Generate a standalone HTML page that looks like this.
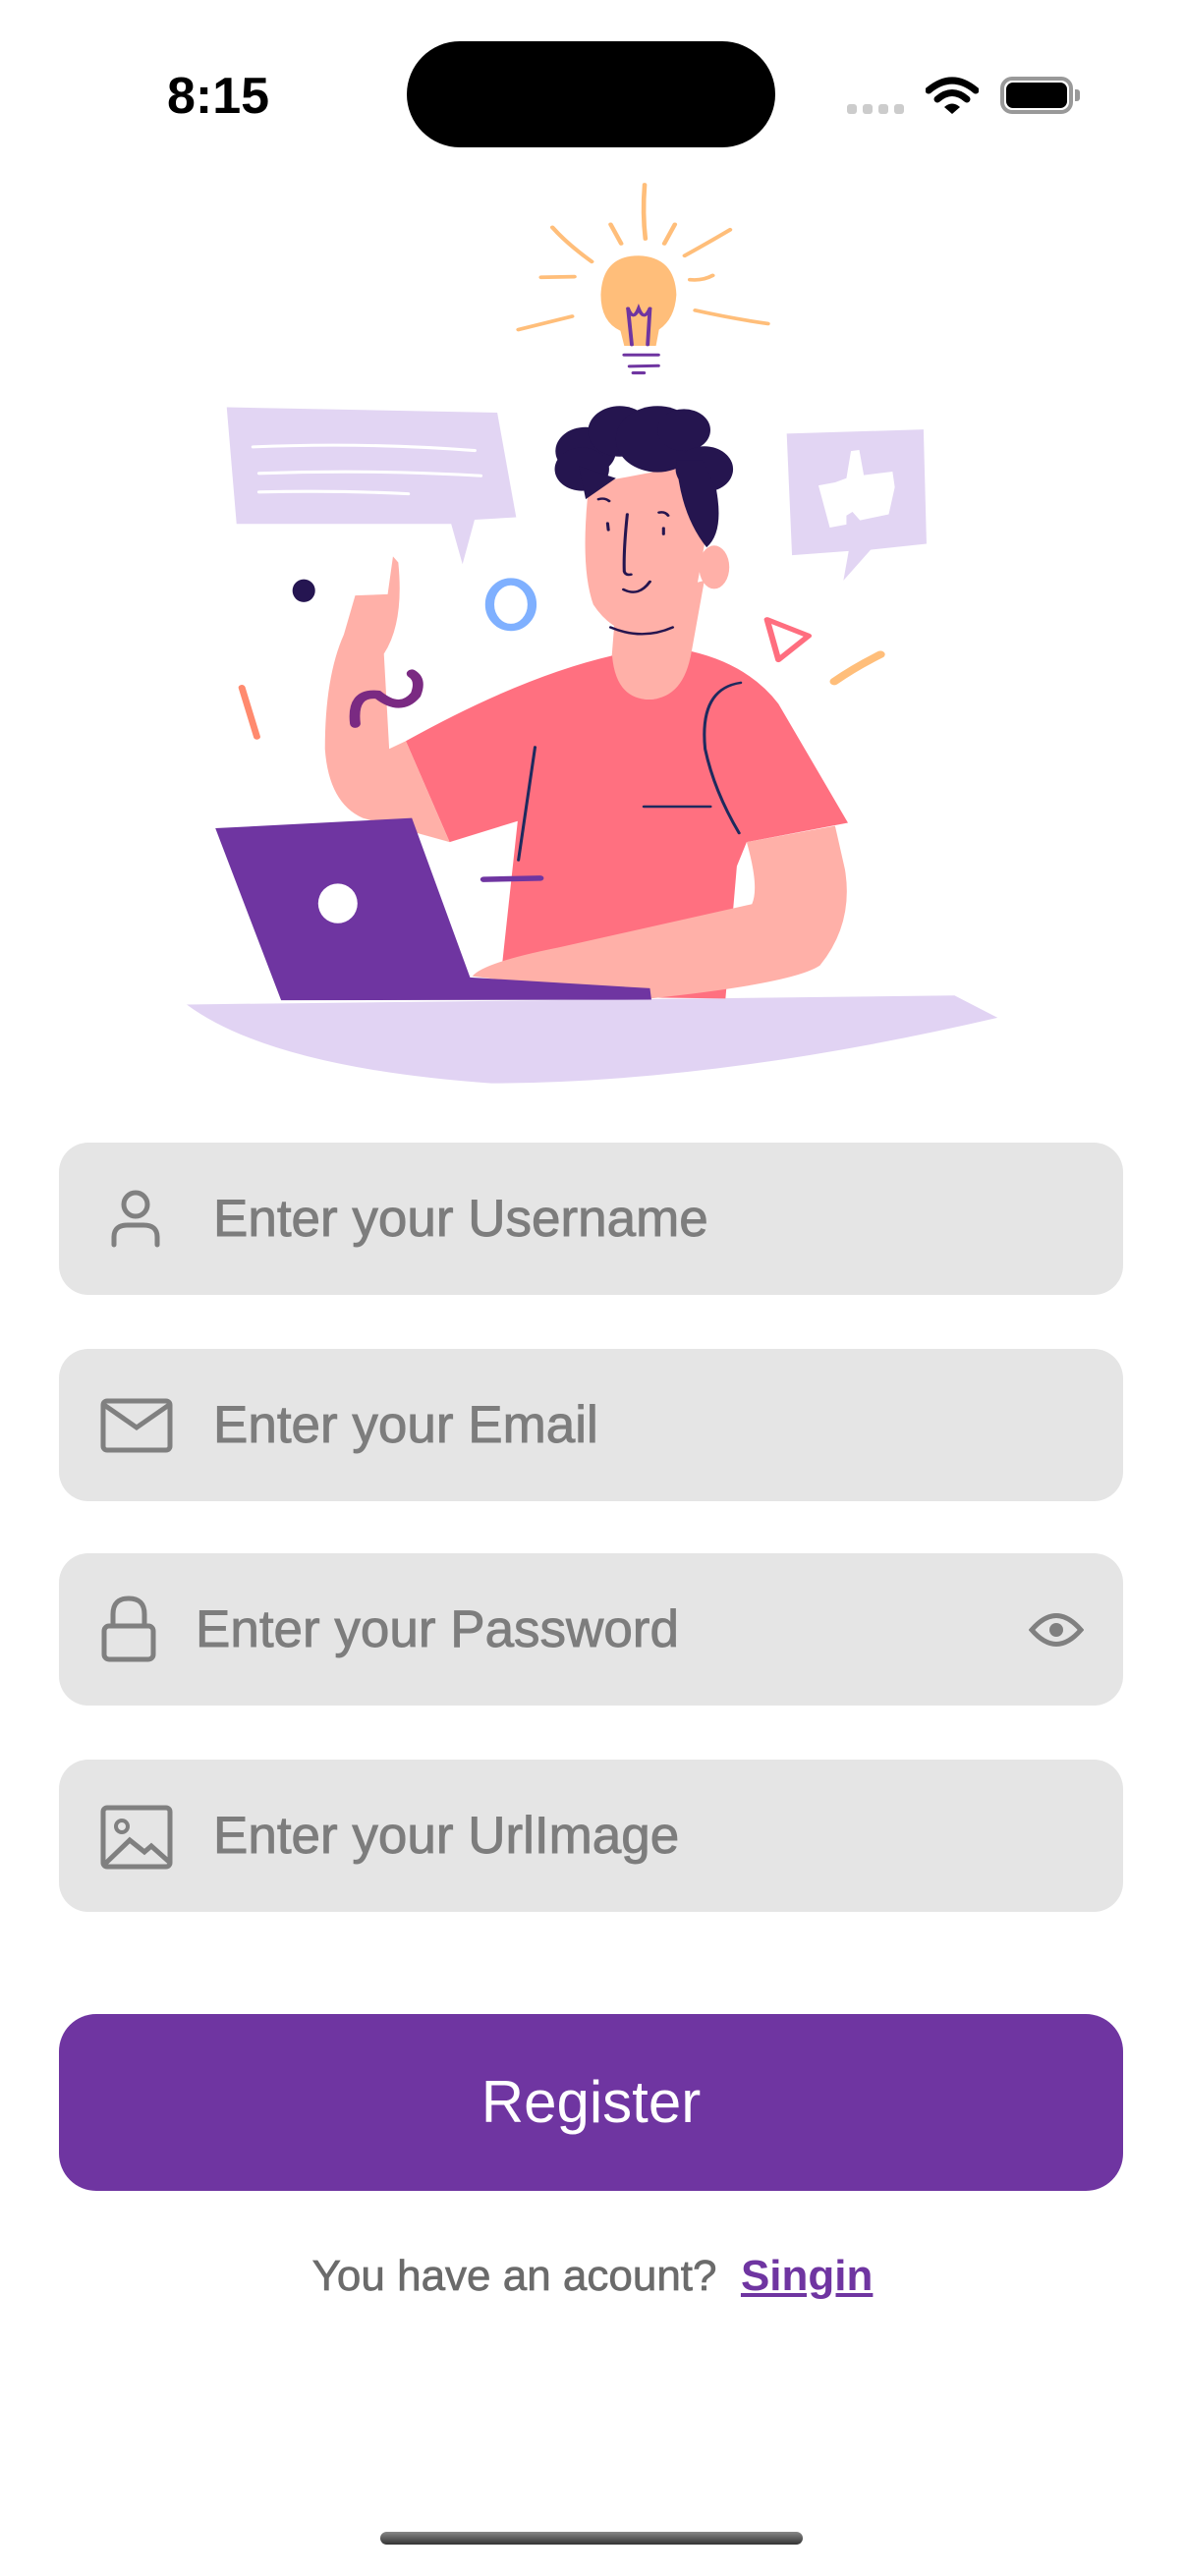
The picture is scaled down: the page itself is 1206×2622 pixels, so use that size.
<!DOCTYPE html>
<html><head><meta charset="utf-8">
<style>
*{margin:0;padding:0;box-sizing:border-box}
html,body{width:1206px;height:2622px;background:#fff;overflow:hidden;font-family:"Liberation Sans",sans-serif;position:relative}
.abs{position:absolute}
.field{position:absolute;left:60px;width:1083px;height:155px;background:#e5e5e5;border-radius:30px}
.ph{position:absolute;left:157px;top:0;line-height:155px;font-size:53px;color:#7d7d7d;-webkit-text-stroke:0.9px #7d7d7d}
.ic{position:absolute}
</style></head><body>

<div class="abs" style="left:170px;top:68px;font-size:52px;font-weight:bold;color:#000">8:15</div>
<div class="abs" style="left:414px;top:42px;width:375px;height:108px;background:#000;border-radius:54px"></div>
<div class="abs" style="left:862px;top:106px;width:10px;height:10px;border-radius:3px;background:#ccc"></div>
<div class="abs" style="left:878px;top:106px;width:10px;height:10px;border-radius:3px;background:#ccc"></div>
<div class="abs" style="left:894px;top:106px;width:10px;height:10px;border-radius:3px;background:#ccc"></div>
<div class="abs" style="left:910px;top:106px;width:10px;height:10px;border-radius:3px;background:#ccc"></div>
<svg class="abs" style="left:942px;top:78px" width="54" height="40" viewBox="0 0 54 40">
<path d="M3,14 Q27,-6 51,14" stroke="#000" stroke-width="7" fill="none" stroke-linecap="round"/>
<path d="M12,23 Q27,10 42,23" stroke="#000" stroke-width="7" fill="none" stroke-linecap="round"/>
<path d="M19,31 L27,38 L35,31 Q27,24 19,31Z" fill="#000"/>
</svg>
<div class="abs" style="left:1018px;top:78px;width:74px;height:38px;border:4px solid #999;border-radius:12px"></div>
<div class="abs" style="left:1024px;top:84px;width:62px;height:26px;background:#000;border-radius:7px"></div>
<div class="abs" style="left:1094px;top:91px;width:5px;height:12px;background:#999;border-radius:0 3px 3px 0"></div>

<svg class="abs" style="left:0;top:150px" width="1206" height="960" viewBox="0 0 1568 1568" preserveAspectRatio="none">
<path d="M247,1425 L1263,1410 L1320,1447 Q950,1555 650,1556 Q360,1530 247,1425Z" fill="#e1d3f3"/>
<polygon points="300,432 658,441 683,615 628,619 612,693 597,626 313,626" fill="#e2d5f3"/>
<g stroke="#fff" stroke-width="5" stroke-linecap="round" fill="none">
<path d="M335,498 Q480,490 628,504"/><path d="M343,542 Q490,535 636,546"/><path d="M343,573 Q450,570 540,576"/>
</g>
<polygon points="1041,476 1222,469 1226,659 1152,669 1116,720 1123,671 1048,678" fill="#e2d5f3"/>
<polygon points="1083,562 1105,557 1120,550 1126,505 1137,503 1143,545 1181,539 1184,565 1176,610 1138,620 1128,606 1120,612 1120,627 1098,632" fill="#fff"/>
<g stroke="#ffbe7a" stroke-width="6" stroke-linecap="round" fill="none">
<path d="M853,62 Q850,110 854,152"/><path d="M808,128 L822,160"/><path d="M893,128 L879,160"/>
<path d="M731,133 Q750,160 783,190"/><path d="M966,137 Q935,160 906,180"/>
<path d="M716,216 L760,215"/><path d="M913,220 Q930,222 943,213"/>
<path d="M686,303 L757,281"/><path d="M920,271 Q970,285 1016,293"/>
<path d="M1104,888 Q1130,865 1165,843" stroke-width="12"/>
</g>
<path d="M845,180 Q893,182 895,245 Q893,285 872,303 L868,330 L826,330 L821,305 Q795,290 795,245 Q797,180 845,180Z" fill="#ffbe7a"/>
<g stroke="#6f35a1" stroke-width="5" fill="none" stroke-linecap="round">
<path d="M831,268 L836,328"/><path d="M860,268 L857,328"/><path d="M831,268 Q838,290 845,268 Q852,290 860,268"/>
<path d="M826,345 L871,345"/><path d="M833,364 L871,363"/><path d="M838,375 L852,375"/>
</g>
<ellipse cx="402" cy="737" rx="15" ry="19" fill="#251551"/>
<ellipse cx="676" cy="760" rx="28" ry="38" stroke="#7fb0ff" stroke-width="12" fill="none"/>
<path d="M1015,785 L1070,812 L1030,852 Z" stroke="#ff6e7f" stroke-width="8" fill="none" stroke-linejoin="round"/>
<path d="M320,898 L340,980" stroke="#ff8a6e" stroke-width="9" stroke-linecap="round"/>
<path d="M815,760 L808,870 Q815,918 860,918 Q905,915 912,860 L932,720 Z" fill="#ffb0a8"/>
<path d="M537,987 Q690,880 810,845 Q815,918 860,918 Q905,915 915,838 Q990,860 1030,925 L1122,1123 L988,1155 L975,1195 L960,1415 L660,1410 L685,1120 L595,1155 Z" fill="#ff7080"/>
<path d="M430,1000 Q430,880 455,810 L470,745 L513,743 L520,680 L527,690 Q535,790 508,842 L515,1000 L537,987 L595,1155 L480,1115 Q435,1090 430,1000Z" fill="#ffb0a8"/>
<path d="M988,1155 Q1005,1230 995,1258 L740,1330 Q640,1355 625,1378 L860,1415 Q1050,1390 1085,1360 Q1130,1290 1118,1200 L1105,1128 Z" fill="#ffb0a8"/>
<path d="M778,575 Q768,700 785,760 Q812,812 860,812 Q905,808 915,780 L935,640 L905,530 L800,555 Z" fill="#ffb0a8"/>
<ellipse cx="945" cy="698" rx="20" ry="36" fill="#ffb0a8"/>
<g fill="#25154f">
<circle cx="775" cy="505" r="40"/><circle cx="770" cy="535" r="36"/><circle cx="820" cy="472" r="42"/><circle cx="870" cy="485" r="55"/><circle cx="905" cy="470" r="35"/><circle cx="932" cy="535" r="38"/>
<path d="M895,520 Q900,610 935,665 Q958,640 948,570 L930,520Z"/>
<path d="M766,530 L775,585 L815,550 Z"/>
</g>
<g stroke="#25154f" stroke-width="4" fill="none" stroke-linecap="round">
<path d="M830,610 Q825,670 826,705 Q828,712 835,710"/><path d="M825,735 Q845,748 860,722"/>
<path d="M804,625 L805,636"/><path d="M878,633 L878,643"/><path d="M792,585 Q800,582 806,588"/><path d="M872,607 Q880,605 884,612"/>
<path d="M808,798 Q850,820 890,798"/>
</g>
<g stroke="#1e2a5e" stroke-width="4" fill="none" stroke-linecap="round">
<path d="M708,997 L686,1185"/><path d="M852,1096 L940,1096"/><path d="M980,890 Q925,900 933,1000 Q945,1070 978,1140"/>
</g>
<path d="M640,1217 L715,1215" stroke="#6f35a1" stroke-width="9" stroke-linecap="round"/>
<path d="M470,958 Q465,905 500,910 Q530,940 550,910 Q558,885 545,875" stroke="#7a2a82" stroke-width="14" fill="none" stroke-linecap="round"/>
<polygon points="285,1132 545,1115 622,1380 860,1398 862,1417 372,1418" fill="#6f35a1"/>
<ellipse cx="447" cy="1257" rx="26" ry="33" fill="#fff"/>
</svg>

<div class="field" style="top:1163px">
<svg class="ic" style="left:48px;top:46px" width="60" height="62" viewBox="0 0 60 62"><circle cx="30" cy="17" r="12" stroke="#808080" stroke-width="5" fill="none"/><path d="M8,58 L8,50 Q8,38 22,38 L38,38 Q52,38 52,50 L52,58" stroke="#808080" stroke-width="5" fill="none" stroke-linecap="round"/></svg>
<div class="ph">Enter your Username</div></div>
<div class="field" style="top:1373px">
<svg class="ic" style="left:42px;top:50px" width="74" height="56" viewBox="0 0 74 56"><rect x="3" y="3" width="68" height="50" rx="4" stroke="#808080" stroke-width="5" fill="none"/><path d="M4,7 L37,30 L70,7" stroke="#808080" stroke-width="5" fill="none"/></svg>
<div class="ph">Enter your Email</div></div>
<div class="field" style="top:1581px">
<svg class="ic" style="left:42px;top:42px" width="60" height="70" viewBox="0 0 60 70"><rect x="4" y="32" width="50" height="34" rx="5" stroke="#808080" stroke-width="5" fill="none"/><path d="M13,32 L13,20 Q13,4 29,4 Q45,4 45,20 L45,32" stroke="#808080" stroke-width="5" fill="none"/></svg>
<div class="ph" style="left:139px">Enter your Password</div>
<svg class="ic" style="left:987px;top:59px" width="56" height="38" viewBox="0 0 56 38"><path d="M3,19 Q28,-10 53,19 Q28,48 3,19Z" stroke="#808080" stroke-width="5" fill="none"/><circle cx="28" cy="19" r="7" fill="#808080"/></svg>
</div>
<div class="field" style="top:1791px">
<svg class="ic" style="left:42px;top:46px" width="74" height="66" viewBox="0 0 74 66"><rect x="3" y="3" width="68" height="60" rx="4" stroke="#808080" stroke-width="5" fill="none"/><circle cx="22" cy="22" r="6" stroke="#808080" stroke-width="4" fill="none"/><path d="M5,60 L30,36 L45,48 L52,42 L70,58" stroke="#808080" stroke-width="5" fill="none"/></svg>
<div class="ph">Enter your UrlImage</div></div>

<div class="abs" style="left:60px;top:2050px;width:1083px;height:180px;background:#6f35a1;border-radius:38px;color:#fff;font-size:60px;text-align:center;line-height:180px">Register</div>

<div class="abs" style="left:0;width:1206px;top:2292px;text-align:center;font-size:44px;color:#6b6b6b;-webkit-text-stroke:0.7px #6b6b6b">You have an acount?&nbsp; <span style="color:#6f35a1;font-weight:bold;text-decoration:underline;-webkit-text-stroke:0">Singin</span></div>

<div class="abs" style="left:387px;top:2577px;width:430px;height:13px;border-radius:7px;background:linear-gradient(#888,#333)"></div>
</body></html>
